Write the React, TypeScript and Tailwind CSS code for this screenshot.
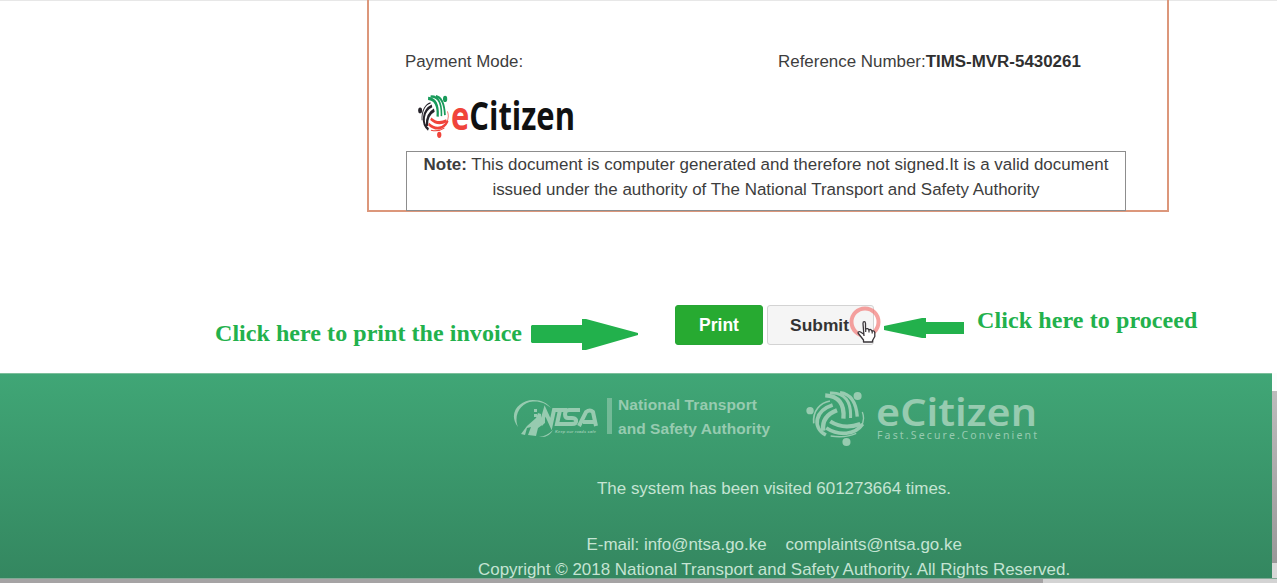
type MarkProps = { className: string; left: string; top: string; bottom: string };

function CitizenMark({ className, left, top, bottom }: MarkProps) {
  return (
    <svg className={className} viewBox="35 33 175 165" preserveAspectRatio="none" fill="none">
      <g stroke={left}>
        <circle cx="47" cy="92" r="11" fill={left} stroke="none" />
        <path d="M58 130C54 92 78 68 106 63" strokeWidth="5" />
        <path d="M94 165C52 142 62 92 114 75" strokeWidth="11" />
        <path d="M86 152C82 118 100 101 127 91" strokeWidth="13" />
      </g>
      <g stroke={top}>
        <circle cx="188" cy="48" r="12" fill={top} stroke="none" />
        <path d="M92 46C132 48 150 72 146 116" strokeWidth="13" />
        <path d="M106 39C152 36 170 68 167 114" strokeWidth="9" />
        <path d="M136 38C168 42 184 68 187 110" strokeWidth="10" />
      </g>
      <g stroke={bottom}>
        <circle cx="155" cy="186" r="12" fill={bottom} stroke="none" />
        <path d="M107 124C134 142 162 144 196 132" strokeWidth="12" />
        <path d="M95 144C132 168 180 166 203 132" strokeWidth="11" />
        <path d="M108 168C138 173 160 171 184 160" strokeWidth="4" />
        <path d="M202 96C209 114 207 128 196 144" strokeWidth="4" />
      </g>
    </svg>
  );
}

function InvoicePanel() {
  return (
    <section className="ml-[367px] h-[212px] w-[802px] border-2 border-t-0 border-[#dc977b] pl-[36px] text-[16.93px] text-[#3d3d3d]">
      <div className="flex h-[93px] pt-[49px] leading-[25px]">
        <div className="w-[373px] text-[16.87px]">Payment Mode:</div>
        <div className="whitespace-nowrap">
          Reference Number:<b className="text-[#303030]">TIMS-MVR-5430261</b>
        </div>
      </div>
      <div className="flex h-[58px] pl-[13px] pt-[2px]">
        <CitizenMark className="h-[43px] w-[31px]" left="#26232a" top="#199b5b" bottom="#f0443b" />
        <svg className="h-[50px] w-[130px] overflow-visible" viewBox="0 0 130 50">
          <text x="2" y="34.500" fontFamily="Open Sans, sans-serif" fontWeight="700" fontSize="39" textLength="124" lengthAdjust="spacingAndGlyphs">
            <tspan fill="#f0443b">e</tspan><tspan fill="#111">Citizen</tspan>
          </text>
        </svg>
      </div>
      <div className="ml-[1px] h-[60px] w-[720px] border border-[#8d8d8d] text-center text-[16.97px] leading-[25px]">
        <p className="whitespace-nowrap"><b>Note:</b> This document is computer generated and therefore not signed.It is a valid document</p>
        <p className="whitespace-nowrap">issued under the authority of The National Transport and Safety Authority</p>
      </div>
    </section>
  );
}

function ClickCursor() {
  return (
    <svg className="absolute left-[76px] top-[-6px] h-[46px] w-[42px]" viewBox="0 0 42 46">
      <circle cx="22" cy="23" r="13.500" fill="none" stroke="#f27b77" strokeOpacity=".7" strokeWidth="4" />
      <path d="m21 37-1-12.500q0-1.800 1.200-1.800t1.300 1.800v5.500q2.500-1.200 3.200.8 2.500-1 3.200 1.200 2.400-.7 2.900 1.500v4l-2.300 4v1.500H20.500v-2L15 34q.5-2 2.500-1l3 2" fill="#fff" stroke="#3a363a" strokeWidth="1.300" strokeLinejoin="round" />
      <path d="M22.700 29v4M26 30.500v3M29.200 31.500v3" stroke="#3a363a" strokeWidth="1.200" />
    </svg>
  );
}

function Actions() {
  return (
    <div className="flex h-[161px] pt-[93px] font-bold">
      <div className="ml-[215px] w-[316px] whitespace-nowrap pt-[14px] font-['Liberation_Serif',serif] text-[24px] leading-[28px] tracking-[0.05px] text-[#22b14c]">Click here to print the invoice</div>
      <svg className="mt-[13px] h-[33px] w-[108px] shrink-0" viewBox="0 0 108 33" fill="#22b14c">
        <path d="M1 7h50V1h4l52 14v2L55 32h-4v-7H1L0 24V8z" />
      </svg>
      <button className="ml-[36px] h-[40px] w-[88px] shrink-0 rounded-[3px] border border-[#27a535] bg-[#27aa31] text-[17.5px] text-white">Print</button>
      <div className="relative ml-[4px] h-[40px] w-[107px] shrink-0">
        <button className="h-[40px] w-full rounded-[3px] border border-[#d3d3d3] bg-[#f5f5f5] pr-[2px] text-[17.4px] text-[#333]">Submit</button>
        <ClickCursor />
      </div>
      <svg className="ml-[9px] mt-[12px] h-[22px] w-[81px] shrink-0" viewBox="0 0 81 22" fill="#22b14c">
        <path d="M81 5H43V1h-4L1 9v4l38 8h4v-4h38z" />
      </svg>
      <div className="ml-[13px] whitespace-nowrap pt-px font-['Liberation_Serif',serif] text-[24px] leading-[28px] tracking-[0.1px] text-[#22b14c]">Click here to proceed</div>
    </div>
  );
}

function FooterLogos() {
  return (
    <div className="flex h-[102px] pl-[512px] pt-[17px]">
      <svg className="h-[54px] w-[262px] overflow-visible" viewBox="0 0 262 54" fill="#97cbb0">
        <path d="M6 36C-5 22 8 9 21 9c9 0 14 3 18 8C33 12 28 10 21 10.500 9 11 1 24 6 36z" />
        <path d="M9 43 15 35l9-8 2-5 3 1v6l4-3v6l-7 5-2 8-8-1 3-8-4 1-2 7z" />
        <path d="M27 46q8-1 14-7-4 8-14 7zM22 18h3v3h-3zM22 23h3v3h-3z" />
        <g fill="none" stroke="#97cbb0" strokeWidth="4">
          <path d="m29 34 4-14 6 13 3-14h13M48 19l-3 14H60q5 0 4-4-1-2-4-2h-4q-3 0-3-4t4-4h11M67 35l7-14q4-3 7 0l3 14M71 31h11" />
        </g>
        <text x="43" y="42" fontSize="4" fontStyle="italic" fontWeight="700" textLength="41">Keep our roads safe</text>
        <path d="M95 7h5v36h-5z" opacity=".6" />
        <g fontFamily="Liberation Sans, sans-serif" fontWeight="700" fontSize="15.500">
          <text x="106" y="19" textLength="139">National Transport</text>
          <text x="106" y="43" textLength="152">and Safety Authority</text>
        </g>
      </svg>
      <CitizenMark className="ml-[32px] h-[55px] w-[59px]" left="#97cbb0" top="#97cbb0" bottom="#97cbb0" />
      <svg className="h-[54px] w-[180px] overflow-visible" viewBox="0 0 180 54" fill="#97cbb0">
        <text x="11" y="34.500" fontFamily="Noto Sans, sans-serif" fontWeight="600" fontSize="37" textLength="161" lengthAdjust="spacingAndGlyphs">eCitizen</text>
        <text x="12" y="48" fontFamily="Noto Sans, sans-serif" fontSize="10.500" textLength="160">Fast.Secure.Convenient</text>
      </svg>
    </div>
  );
}

function Footer() {
  return (
    <footer className="h-[205px] w-[1272px] overflow-hidden border-t border-[#7cbf9b] bg-linear-to-b from-[#40a676] to-[#348760] text-[16.94px] leading-[25px] text-[#c5e4d3]">
      <FooterLogos />
      <p className="pl-[597px]">The system has been visited 601273664 times.</p>
      <div className="flex gap-[19px] pl-[586.5px] pt-[31px]">
        <span>E-mail: info@ntsa.go.ke</span>
        <span>complaints@ntsa.go.ke</span>
      </div>
      <p className="whitespace-nowrap pl-[478px]">Copyright © 2018 National Transport and Safety Authority. All Rights Reserved.</p>
    </footer>
  );
}

export default function App() {
  return (
    <div className="h-[583px] w-[1277px] overflow-hidden bg-white font-['Liberation_Sans',Arial,sans-serif]">
      <div className="h-px bg-[#e7e7e7]" />
      <div className="-mt-px">
        <InvoicePanel />
        <Actions />
      </div>
      <div className="flex h-[205px]">
        <Footer />
        <div className="flex w-[5px] flex-col">
          <div className="h-[18px] bg-[#fcfcfc]" />
          <div className="h-[172px] bg-linear-to-b from-[#bcbcbc] to-[#999]" />
          <div className="flex-1 bg-[#d8d8d8]" />
        </div>
      </div>
      <div className="flex h-[5px] border-t border-[#82aa96]">
        <div className="w-[1043px] bg-[#a5a3a4]" />
        <div className="flex-1 bg-[#d3d3d3]" />
      </div>
    </div>
  );
}
